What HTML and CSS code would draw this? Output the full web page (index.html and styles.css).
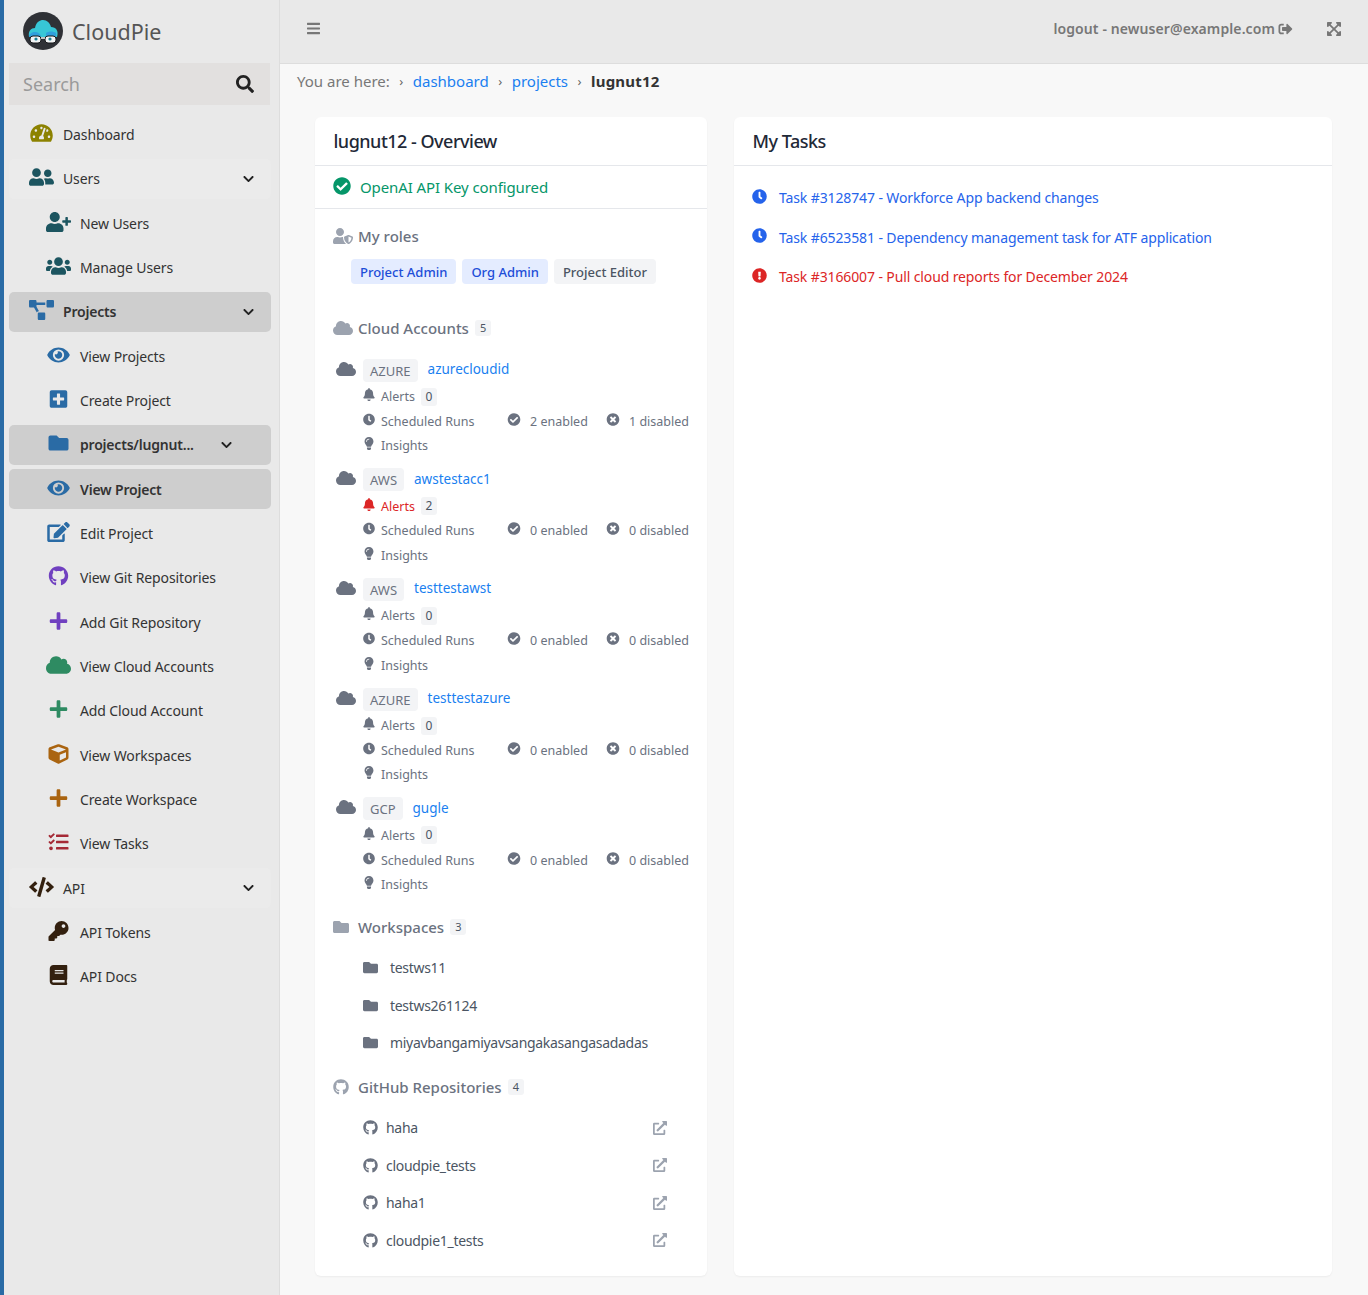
FILE: index.html
```html
<!DOCTYPE html>
<html lang="en">
<head>
    <meta charset="UTF-8">
    <meta name="viewport" content="width=device-width, initial-scale=1.0">
    <title>CloudPie - lugnut12</title>
    <link rel="stylesheet" href="styles.css">
</head>
<body>
    <!-- icon sprite -->
    <svg class="sprite" xmlns="http://www.w3.org/2000/svg">
        <symbol id="i-search" viewBox="0 0 512 512"><path d="M505 442.7L405.3 343c-4.5-4.5-10.6-7-17-7H372c27.6-35.3 44-79.7 44-128C416 93.1 322.9 0 208 0S0 93.1 0 208s93.1 208 208 208c48.3 0 92.7-16.4 128-44v16.3c0 6.4 2.5 12.5 7 17l99.7 99.7c9.4 9.4 24.6 9.4 33.9 0l28.3-28.3c9.4-9.4 9.4-24.6.1-34zM208 336c-70.7 0-128-57.2-128-128 0-70.7 57.2-128 128-128 70.7 0 128 57.2 128 128 0 70.7-57.2 128-128 128z"/></symbol>
        <symbol id="i-bars" viewBox="0 0 448 512"><path d="M16 132h416c8.837 0 16-7.163 16-16V76c0-8.837-7.163-16-16-16H16C7.163 60 0 67.163 0 76v40c0 8.837 7.163 16 16 16zm0 160h416c8.837 0 16-7.163 16-16v-40c0-8.837-7.163-16-16-16H16c-8.837 0-16 7.163-16 16v40c0 8.837 7.163 16 16 16zm0 160h416c8.837 0 16-7.163 16-16v-40c0-8.837-7.163-16-16-16H16c-8.837 0-16 7.163-16 16v40c0 8.837 7.163 16 16 16z"/></symbol>
        <symbol id="i-check" viewBox="0 0 512 512"><path d="M504 256c0 136.967-111.033 248-248 248S8 392.967 8 256 119.033 8 256 8s248 111.033 248 248zM227.314 387.314l184-184c6.248-6.248 6.248-16.379 0-22.627l-22.627-22.627c-6.248-6.249-16.379-6.249-22.628 0L216 308.118l-70.059-70.059c-6.248-6.248-16.379-6.248-22.628 0l-22.627 22.627c-6.248 6.248-6.248 16.379 0 22.627l104 104c6.249 6.249 16.379 6.249 22.628.001z"/></symbol>
        <symbol id="i-times" viewBox="0 0 512 512"><path d="M256 8C119 8 8 119 8 256s111 248 248 248 248-111 248-248S393 8 256 8zm121.6 313.1c4.7 4.7 4.7 12.3 0 17L338 377.6c-4.7 4.7-12.3 4.7-17 0L256 312l-65.1 65.6c-4.7 4.7-12.3 4.7-17 0L134.4 338c-4.7-4.7-4.7-12.3 0-17l65.6-65-65.6-65.1c-4.7-4.7-4.7-12.3 0-17l39.6-39.6c4.7-4.7 12.3-4.7 17 0l65 65.7 65.1-65.6c4.7-4.7 12.3-4.7 17 0l39.6 39.6c4.7 4.7 4.7 12.3 0 17L312 256l65.6 65.1z"/></symbol>
        <symbol id="i-clock" viewBox="0 0 512 512"><path d="M256,8C119,8,8,119,8,256S119,504,256,504,504,393,504,256,393,8,256,8Zm92.49,313h0l-20,25a16,16,0,0,1-22.49,2.5h0l-67-49.72a40,40,0,0,1-15-31.23V112a16,16,0,0,1,16-16h32a16,16,0,0,1,16,16V256l58,42.5A16,16,0,0,1,348.49,321Z"/></symbol>
        <symbol id="i-excl" viewBox="0 0 512 512"><path d="M504 256c0 136.997-111.043 248-248 248S8 392.997 8 256C8 119.083 119.043 8 256 8s248 111.083 248 248zm-248 50c-25.405 0-46 20.595-46 46s20.595 46 46 46 46-20.595 46-46-20.595-46-46-46zm-43.673-165.346l7.418 136c.347 6.364 5.609 11.346 11.982 11.346h48.546c6.373 0 11.635-4.982 11.982-11.346l7.418-136c.375-6.874-5.098-12.654-11.982-12.654h-63.383c-6.884 0-12.356 5.78-11.981 12.654z"/></symbol>
        <symbol id="i-bell" viewBox="0 0 448 512"><path d="M224 512c35.32 0 63.97-28.65 63.97-64H160.03c0 35.35 28.65 64 63.97 64zm215.39-149.71c-19.32-20.76-55.47-51.99-55.47-154.29 0-77.7-54.48-139.9-127.94-155.16V32c0-17.67-14.32-32-31.98-32s-31.98 14.33-31.98 32v20.84C118.56 68.1 64.08 130.3 64.08 208c0 102.3-36.15 133.53-55.47 154.29-6 6.45-8.66 14.16-8.61 21.71.11 16.4 12.98 32 32.1 32h383.8c19.12 0 32-15.6 32.1-32 .05-7.55-2.61-15.27-8.61-21.71z"/></symbol>
        <symbol id="i-cloud" viewBox="0 0 640 512"><path d="M537.6 226.6c4.1-10.7 6.4-22.4 6.4-34.6 0-53-43-96-96-96-19.7 0-38.1 6-53.3 16.2C367 64.2 315.3 32 256 32c-88.4 0-160 71.6-160 160 0 2.7.1 5.4.2 8.1C40.2 219.8 0 273.2 0 336c0 79.5 64.5 144 144 144h368c70.7 0 128-57.3 128-128 0-61.9-44-113.6-102.4-125.4z"/></symbol>
        <symbol id="i-folder" viewBox="0 0 512 512"><path d="M464 128H272l-64-64H48C21.49 64 0 85.49 0 112v288c0 26.51 21.49 48 48 48h416c26.51 0 48-21.49 48-48V176c0-26.51-21.49-48-48-48z"/></symbol>
        <symbol id="i-bulb" viewBox="0 0 352 512"><path d="M96.06 454.35c.01 6.29 1.87 12.45 5.36 17.69l17.09 25.69a31.99 31.99 0 0 0 26.64 14.28h61.71a31.99 31.99 0 0 0 26.64-14.28l17.09-25.69a31.989 31.989 0 0 0 5.36-17.69l.04-38.35H96.01l.05 38.35zM0 176c0 44.37 16.45 84.85 43.56 115.78 16.52 18.85 42.36 58.23 52.21 91.45.04.26.07.52.11.78h160.24c.04-.26.07-.51.11-.78 9.85-33.22 35.69-72.6 52.21-91.45C335.55 260.85 352 220.37 352 176 352 78.61 272.91-.3 175.45 0 73.44.31 0 82.97 0 176zm176-80c-44.11 0-80 35.89-80 80 0 8.84-7.16 16-16 16s-16-7.16-16-16c0-61.76 50.24-112 112-112 8.84 0 16 7.16 16 16s-7.16 16-16 16z"/></symbol>
        <symbol id="i-eye" viewBox="0 0 576 512"><path d="M572.52 241.4C518.29 135.59 410.93 64 288 64S57.68 135.64 3.48 241.41a32.35 32.35 0 0 0 0 29.19C57.71 376.41 165.07 448 288 448s230.32-71.64 284.52-177.41a32.35 32.35 0 0 0 0-29.19zM288 400a144 144 0 1 1 144-144 143.93 143.93 0 0 1-144 144zm0-240a95.31 95.31 0 0 0-25.31 3.79 47.85 47.85 0 0 1-66.9 66.9A95.78 95.78 0 1 0 288 160z"/></symbol>
        <symbol id="i-plus-square" viewBox="0 0 448 512"><path d="M400 32H48C21.5 32 0 53.5 0 80v352c0 26.5 21.5 48 48 48h352c26.5 0 48-21.5 48-48V80c0-26.5-21.5-48-48-48zm-32 252c0 6.6-5.4 12-12 12h-92v92c0 6.6-5.4 12-12 12h-56c-6.6 0-12-5.4-12-12v-92H92c-6.6 0-12-5.4-12-12v-56c0-6.6 5.4-12 12-12h92v-92c0-6.6 5.4-12 12-12h56c6.6 0 12 5.4 12 12v92h92c6.6 0 12 5.4 12 12v56z"/></symbol>
        <symbol id="i-plus" viewBox="0 0 448 512"><path d="M416 208H272V64c0-17.67-14.33-32-32-32h-32c-17.67 0-32 14.33-32 32v144H32c-17.67 0-32 14.33-32 32v32c0 17.67 14.33 32 32 32h144v144c0 17.67 14.33 32 32 32h32c17.67 0 32-14.33 32-32V304h144c17.67 0 32-14.33 32-32v-32c0-17.67-14.33-32-32-32z"/></symbol>
        <symbol id="i-edit" viewBox="0 0 576 512"><path d="M402.6 83.2l90.2 90.2c3.8 3.8 3.8 10 0 13.8L274.4 405.6l-92.8 10.3c-12.4 1.4-22.9-9.1-21.5-21.5l10.3-92.8L388.8 83.2c3.8-3.8 10-3.8 13.8 0zm162-22.9l-48.8-48.8c-15.2-15.2-39.9-15.2-55.2 0l-35.4 35.4c-3.8 3.8-3.8 10 0 13.8l90.2 90.2c3.8 3.8 10 3.8 13.8 0l35.4-35.4c15.2-15.3 15.2-40 0-55.2zM384 346.2V448H64V128h229.8c3.2 0 6.2-1.3 8.5-3.5l40-40c7.6-7.6 2.2-20.5-8.5-20.5H48C21.5 64 0 85.5 0 112v352c0 26.5 21.5 48 48 48h352c26.5 0 48-21.5 48-48V306.2c0-10.7-12.9-16-20.5-8.5l-40 40c-2.2 2.3-3.5 5.3-3.5 8.5z"/></symbol>
        <symbol id="i-github" viewBox="0 0 496 512"><path d="M244.8 8C106.1 8 0 113.3 0 252c0 110.9 69.8 205.8 169.5 239.2 12.8 2.3 17.3-5.6 17.3-12.1 0-6.2-.3-40.4-.3-61.4 0 0-70 15-84.7-29.8 0 0-11.4-29.1-27.8-36.6 0 0-22.9-15.7 1.6-15.4 0 0 24.9 2 38.6 25.8 21.9 38.6 58.6 27.5 72.9 20.9 2.3-16 8.8-27.1 16-33.7-55.9-6.2-112.3-14.3-112.3-110.5 0-27.5 7.6-41.3 23.6-58.9-2.6-6.5-11.1-33.3 2.6-67.9 20.9-6.5 69 27 69 27 20-5.6 41.5-8.5 62.8-8.5s42.8 2.9 62.8 8.5c0 0 48.1-33.6 69-27 13.7 34.7 5.2 61.4 2.6 67.9 16 17.7 25.8 31.5 25.8 58.9 0 96.5-58.9 104.2-114.8 110.5 9.2 7.9 17 22.9 17 46.4 0 33.7-.3 75.4-.3 83.6 0 6.5 4.6 14.4 17.3 12.1C428.2 457.8 496 362.9 496 252 496 113.3 383.5 8 244.8 8z"/></symbol>
        <symbol id="i-external" viewBox="0 0 512 512"><path d="M432,320H400a16,16,0,0,0-16,16V448H64V128H208a16,16,0,0,0,16-16V80a16,16,0,0,0-16-16H48A48,48,0,0,0,0,112V464a48,48,0,0,0,48,48H400a48,48,0,0,0,48-48V336A16,16,0,0,0,432,320ZM488,0h-128c-21.37,0-32.05,25.91-17,41l35.73,35.73L135,320.37a24,24,0,0,0,0,34L157.67,377a24,24,0,0,0,34,0L435.28,133.32,471,169c15,15,41,4.5,41-17V24A24,24,0,0,0,488,0Z"/></symbol>
        <symbol id="i-users" viewBox="0 0 640 512"><path d="M192 256c61.9 0 112-50.1 112-112S253.9 32 192 32 80 82.1 80 144s50.1 112 112 112zm76.8 32h-8.3c-20.8 10-43.9 16-68.5 16s-47.6-6-68.5-16h-8.3C51.6 288 0 339.6 0 403.2V432c0 26.5 21.5 48 48 48h288c26.5 0 48-21.5 48-48v-28.8c0-63.6-51.6-115.2-115.2-115.2zM480 256c53 0 96-43 96-96s-43-96-96-96-96 43-96 96 43 96 96 96zm48 32h-3.8c-13.9 4.8-28.6 8-44.2 8s-30.3-3.2-44.2-8H432c-20.4 0-39.2 5.9-55.7 15.4 24.4 26.3 39.7 61.2 39.7 99.8v38.4c0 2.2-.5 4.3-.6 6.4H592c26.5 0 48-21.5 48-48 0-61.9-50.1-112-112-112z"/></symbol>
        <symbol id="i-group" viewBox="0 0 640 512"><path d="M96 224c35.3 0 64-28.7 64-64s-28.7-64-64-64-64 28.7-64 64 28.7 64 64 64zm448 0c35.3 0 64-28.7 64-64s-28.7-64-64-64-64 28.7-64 64 28.7 64 64 64zm32 32h-64c-17.6 0-33.5 7.1-45.1 18.6 40.3 22.1 68.9 62 75.1 109.4h66c17.7 0 32-14.3 32-32v-32c0-35.3-28.7-64-64-64zm-256 0c61.9 0 112-50.1 112-112S381.9 32 320 32 208 82.1 208 144s50.1 112 112 112zm76.8 32h-8.3c-20.8 10-43.9 16-68.5 16s-47.6-6-68.5-16h-8.3C179.6 288 128 339.6 128 403.2V432c0 26.5 21.5 48 48 48h288c26.5 0 48-21.5 48-48v-28.8c0-63.6-51.6-115.2-115.2-115.2zm-223.7-13.4C161.5 263.1 145.6 256 128 256H64c-35.3 0-64 28.7-64 64v32c0 17.7 14.3 32 32 32h65.9c6.3-47.4 34.9-87.3 75.2-109.4z"/></symbol>
        <symbol id="i-user-plus" viewBox="0 0 640 512"><path d="M624 208h-64v-64c0-8.8-7.2-16-16-16h-32c-8.8 0-16 7.2-16 16v64h-64c-8.8 0-16 7.2-16 16v32c0 8.8 7.2 16 16 16h64v64c0 8.8 7.2 16 16 16h32c8.8 0 16-7.2 16-16v-64h64c8.8 0 16-7.2 16-16v-32c0-8.8-7.2-16-16-16zm-400 48c70.7 0 128-57.3 128-128S294.7 0 224 0 96 57.3 96 128s57.3 128 128 128zm89.6 32h-16.7c-22.2 10.2-46.9 16-72.9 16s-50.6-5.8-72.9-16h-16.7C60.2 288 0 348.2 0 422.4V464c0 26.5 21.5 48 48 48h352c26.5 0 48-21.5 48-48v-41.6c0-74.2-60.2-134.4-134.4-134.4z"/></symbol>
        <symbol id="i-chevron" viewBox="0 0 448 512"><path d="M207.029 381.476L12.686 187.132c-9.373-9.373-9.373-24.569 0-33.941l22.667-22.667c9.357-9.357 24.522-9.375 33.901-.04L224 284.505l154.745-154.021c9.379-9.335 24.544-9.317 33.901.04l22.667 22.667c9.373 9.373 9.373 24.569 0 33.941L240.971 381.476c-9.373 9.372-24.569 9.372-33.942 0z"/></symbol>
        <symbol id="i-diagram" viewBox="0 0 640 512"><path d="M384 320H256c-17.67 0-32 14.33-32 32v128c0 17.67 14.33 32 32 32h128c17.67 0 32-14.33 32-32V352c0-17.67-14.33-32-32-32zM192 32c0-17.67-14.33-32-32-32H32C14.33 0 0 14.33 0 32v128c0 17.67 14.33 32 32 32h95.72l73.16 128.04C211.98 300.98 232.4 288 256 288h.28L192 175.51V128h224V64H192V32zM608 0H480c-17.67 0-32 14.33-32 32v128c0 17.67 14.33 32 32 32h128c17.67 0 32-14.33 32-32V32c0-17.67-14.33-32-32-32z"/></symbol>
        <symbol id="i-gauge" viewBox="0 0 576 512"><path d="M288 32C128.94 32 0 160.94 0 320c0 52.8 14.25 102.26 39.06 144.8 5.61 9.62 16.3 15.2 27.44 15.2h443c11.14 0 21.83-5.58 27.44-15.2C561.75 422.26 576 372.8 576 320c0-159.06-128.94-288-288-288zm0 64c14.71 0 26.58 10.13 30.32 23.65-1.11 2.26-2.64 4.23-3.45 6.67l-9.22 27.67c-5.13 3.49-10.97 6.01-17.64 6.01-17.67 0-32-14.33-32-32S270.33 96 288 96zM96 384c-17.67 0-32-14.33-32-32s14.33-32 32-32 32 14.33 32 32-14.33 32-32 32zm48-160c-17.67 0-32-14.33-32-32s14.33-32 32-32 32 14.33 32 32-14.33 32-32 32zm246.77-72.41l-61.33 184C343.13 347.33 352 364.54 352 384c0 11.72-3.38 22.55-8.88 32H232.88c-5.5-9.45-8.88-20.28-8.88-32 0-33.94 26.5-61.43 59.9-63.59l61.34-184.01c4.17-12.56 17.73-19.45 30.36-15.17 12.57 4.19 19.35 17.79 15.17 30.36zm14.66 57.2l15.52-46.55c3.47-1.29 7.13-2.23 11.05-2.23 17.67 0 32 14.33 32 32s-14.33 32-32 32c-11.38-.01-20.89-6.28-26.57-15.22zM480 384c-17.67 0-32-14.33-32-32s14.33-32 32-32 32 14.33 32 32-14.33 32-32 32z"/></symbol>
        <symbol id="i-cube" viewBox="0 0 512 512"><path d="M239.1 6.3l-208 78c-18.7 7-31.1 25-31.1 45v225.1c0 18.2 10.3 34.8 26.5 42.9l208 104c13.5 6.8 29.4 6.8 42.9 0l208-104c16.3-8.1 26.5-24.8 26.5-42.9V129.3c0-20-12.4-37.9-31.1-44.9l-208-78C262 2.2 250 2.2 239.1 6.3zM256 68.4l192 72v1.1l-192 78-192-78v-1.1l192-72zm32 356V275.5l160-65v133.9l-160 80z"/></symbol>
        <symbol id="i-tasks" viewBox="0 0 512 512"><path d="M139.61 35.5a12 12 0 0 0-17 0L58.93 98.81l-22.7-22.12a12 12 0 0 0-17 0L3.53 92.41a12 12 0 0 0 0 17l47.59 47.4a12.78 12.78 0 0 0 17.61 0l15.59-15.62L156.52 69a12.09 12.09 0 0 0 .09-17zm0 159.19a12 12 0 0 0-17 0l-63.68 63.72-22.7-22.1a12 12 0 0 0-17 0L3.53 252a12 12 0 0 0 0 17L51 316.5a12.77 12.77 0 0 0 17.6 0l15.7-15.69 72.2-72.22a12 12 0 0 0 .09-16.9zM64 368c-26.49 0-48.59 21.5-48.59 48S37.53 464 64 464a48 48 0 0 0 0-96zm432 16H208a16 16 0 0 0-16 16v32a16 16 0 0 0 16 16h288a16 16 0 0 0 16-16v-32a16 16 0 0 0-16-16zm0-320H208a16 16 0 0 0-16 16v32a16 16 0 0 0 16 16h288a16 16 0 0 0 16-16V80a16 16 0 0 0-16-16zm0 160H208a16 16 0 0 0-16 16v32a16 16 0 0 0 16 16h288a16 16 0 0 0 16-16v-32a16 16 0 0 0-16-16z"/></symbol>
        <symbol id="i-code" viewBox="0 0 640 512"><path d="M278.9 511.5l-61-17.7c-6.4-1.8-10-8.5-8.2-14.9L346.2 8.7c1.8-6.4 8.5-10 14.9-8.2l61 17.7c6.4 1.8 10 8.5 8.2 14.9L293.8 503.3c-1.9 6.4-8.5 10.1-14.9 8.2zm-114-112.2l43.5-46.4c4.6-4.9 4.3-12.7-.8-17.2L117 256l90.6-79.7c5.1-4.5 5.5-12.3.8-17.2l-43.5-46.4c-4.5-4.8-12.1-5.1-17-.5L3.8 247.2c-5.1 4.7-5.1 12.8 0 17.5l144.1 135.1c4.9 4.6 12.5 4.4 17-.5zm327.2.6l144.1-135.1c5.1-4.7 5.1-12.8 0-17.5L492.1 112.1c-4.8-4.5-12.4-4.3-17 .5L431.6 159c-4.6 4.9-4.3 12.7.8 17.2L523 256l-90.6 79.7c-5.1 4.5-5.5 12.3-.8 17.2l43.5 46.4c4.5 4.9 12.1 5.1 17 .6z"/></symbol>
        <symbol id="i-key" viewBox="0 0 512 512"><path d="M512 176.001C512 273.203 433.202 352 336 352c-11.22 0-22.19-1.062-32.827-3.069l-24.012 27.014A23.999 23.999 0 0 1 261.223 384H224v40c0 13.255-10.745 24-24 24h-40v40c0 13.255-10.745 24-24 24H24c-13.255 0-24-10.745-24-24v-78.059c0-6.365 2.529-12.47 7.029-16.971l161.802-161.802C163.108 213.814 160 195.271 160 176 160 78.798 238.797.001 335.999 0 433.488-.001 512 78.511 512 176.001zM336 128c0 26.51 21.49 48 48 48s48-21.49 48-48-21.49-48-48-48-48 21.49-48 48z"/></symbol>
        <symbol id="i-book" viewBox="0 0 448 512"><path d="M448 360V24c0-13.3-10.7-24-24-24H96C43 0 0 43 0 96v320c0 53 43 96 96 96h328c13.3 0 24-10.7 24-24v-16c0-7.5-3.5-14.3-8.9-18.7-4.2-15.4-4.2-59.3 0-74.7 5.4-4.3 8.9-11.1 8.9-18.6zM128 134c0-3.3 2.7-6 6-6h212c3.3 0 6 2.7 6 6v20c0 3.3-2.7 6-6 6H134c-3.3 0-6-2.7-6-6v-20zm0 64c0-3.3 2.7-6 6-6h212c3.3 0 6 2.7 6 6v20c0 3.3-2.7 6-6 6H134c-3.3 0-6-2.7-6-6v-20zm253.4 250H96c-17.7 0-32-14.3-32-32 0-17.6 14.4-32 32-32h285.4c-1.9 17.1-1.9 46.9 0 64z"/></symbol>
        <symbol id="i-logout" viewBox="0 0 512 512"><path d="M497 273L329 441c-15 15-41 4.5-41-17v-96H152c-13.3 0-24-10.7-24-24v-96c0-13.3 10.7-24 24-24h136V88c0-21.4 25.9-32 41-17l168 168c9.3 9.4 9.3 24.6 0 34zM192 436v-40c0-6.6-5.4-12-12-12H96c-17.7 0-32-14.3-32-32V160c0-17.7 14.3-32 32-32h84c6.6 0 12-5.4 12-12V76c0-6.6-5.4-12-12-12H96c-53 0-96 43-96 96v192c0 53 43 96 96 96h84c6.6 0 12-5.4 12-12z"/></symbol>
        <symbol id="i-expand" viewBox="0 0 448 512"><path d="M448 344v112a23.94 23.94 0 0 1-24 24H312c-21.39 0-32.09-25.9-17-41l36.2-36.2L224 295.6 116.77 402.9 153 439c15.09 15.1 4.39 41-17 41H24a23.94 23.94 0 0 1-24-24V344c0-21.4 25.89-32.1 41-17l36.19 36.2L184.46 256 77.18 148.7 41 185c-15.1 15.1-41 4.4-41-17V56a23.94 23.94 0 0 1 24-24h112c21.39 0 32.09 25.9 17 41l-36.2 36.2L224 216.4l107.23-107.3L295 73c-15.09-15.1-4.39-41 17-41h112a23.94 23.94 0 0 1 24 24v112c0 21.4-25.89 32.1-41 17l-36.19-36.2L263.54 256l107.28 107.3L407 327.1c15.1-15.2 41-4.5 41 16.9z"/></symbol>
        <symbol id="i-shield" viewBox="0 0 640 512"><path d="M622.3 271.1l-115.2-45c-4.1-1.6-12.6-3.7-22.2 0l-115.2 45c-10.7 4.2-17.7 14-17.7 24.9 0 111.6 68.7 188.8 132.9 213.9 9.6 3.7 18 1.6 22.2 0C558.4 489.9 640 420.5 640 296c0-10.9-7-20.7-17.7-24.9zM496 462.4V273.3l95.5 37.3c-5.6 87.1-60.9 135.4-95.5 151.8zM224 256c70.7 0 128-57.3 128-128S294.7 0 224 0 96 57.3 96 128s57.3 128 128 128zm96 40c0-2.5.8-4.7 1.1-7.2-2.5-.1-4.9-.8-7.5-.8h-16.7c-22.2 10.2-46.9 16-72.9 16s-50.6-5.8-72.9-16h-16.7C60.2 288 0 348.2 0 422.4V464c0 26.5 21.5 48 48 48h352c6.8 0 13.3-1.5 19.2-4-54-42.9-99.2-116.7-99.2-212z"/></symbol>
    </svg>

    <div class="app">
        <aside class="sidebar">
            <div class="brand">
                <svg class="logo" viewBox="0 0 40 38">
                    <ellipse cx="20" cy="19" rx="20" ry="19" fill="#2f3136"/>
                    <path d="M6 25c-1-6 2-9 6-9 1-6 5-8 8-8 4 0 7 3 8 7 5 0 8 4 6 10z" fill="#37c6d6"/>
                    <path d="M6 25c0-3 3-5 6-5 3 0 5 2 6 4z" fill="#2f9fdc"/>
                    <path d="M23 21c3-2 7-2 10 0v3H23z" fill="#2f9fdc"/>
                    <rect x="7" y="24" width="11" height="7" rx="3" fill="#f2f4f5" stroke="#16181b" stroke-width="1"/>
                    <rect x="22" y="24" width="11" height="7" rx="3" fill="#f2f4f5" stroke="#16181b" stroke-width="1"/>
                    <path d="M18 26h4" stroke="#f2f4f5" stroke-width="1.5"/>
                    <circle cx="13" cy="27" r="1.6" fill="#1d7f93"/>
                    <circle cx="27" cy="27" r="1.6" fill="#1d7f93"/>
                </svg>
                <span class="brand-name">CloudPie</span>
            </div>
            <div class="search">
                <span class="search-text">Search</span>
                <svg class="search-ico"><use href="#i-search"/></svg>
            </div>
            <nav class="nav">
                <a class="nav-item"><svg class="ico c-olive"><use href="#i-gauge"/></svg>Dashboard</a>
                <a class="nav-item group"><svg class="ico c-teal"><use href="#i-users"/></svg>Users<svg class="chev"><use href="#i-chevron"/></svg></a>
                <a class="nav-item sub"><svg class="ico c-teal"><use href="#i-user-plus"/></svg>New Users</a>
                <a class="nav-item sub"><svg class="ico c-teal"><use href="#i-group"/></svg>Manage Users</a>
                <a class="nav-item active"><svg class="ico c-blue"><use href="#i-diagram"/></svg>Projects<svg class="chev"><use href="#i-chevron"/></svg></a>
                <a class="nav-item sub"><svg class="ico c-blue"><use href="#i-eye"/></svg>View Projects</a>
                <a class="nav-item sub"><svg class="ico c-blue"><use href="#i-plus-square"/></svg>Create Project</a>
                <a class="nav-item sub active"><svg class="ico c-blue"><use href="#i-folder"/></svg>projects/lugnut...<svg class="chev chev-sub"><use href="#i-chevron"/></svg></a>
                <a class="nav-item sub active"><svg class="ico c-blue"><use href="#i-eye"/></svg>View Project</a>
                <a class="nav-item sub"><svg class="ico c-blue"><use href="#i-edit"/></svg>Edit Project</a>
                <a class="nav-item sub"><svg class="ico c-purple"><use href="#i-github"/></svg>View Git Repositories</a>
                <a class="nav-item sub"><svg class="ico c-purple"><use href="#i-plus"/></svg>Add Git Repository</a>
                <a class="nav-item sub"><svg class="ico c-green"><use href="#i-cloud"/></svg>View Cloud Accounts</a>
                <a class="nav-item sub"><svg class="ico c-green"><use href="#i-plus"/></svg>Add Cloud Account</a>
                <a class="nav-item sub"><svg class="ico c-amber"><use href="#i-cube"/></svg>View Workspaces</a>
                <a class="nav-item sub"><svg class="ico c-amber"><use href="#i-plus"/></svg>Create Workspace</a>
                <a class="nav-item sub"><svg class="ico c-red"><use href="#i-tasks"/></svg>View Tasks</a>
                <a class="nav-item group"><svg class="ico c-brown"><use href="#i-code"/></svg>API<svg class="chev"><use href="#i-chevron"/></svg></a>
                <a class="nav-item sub"><svg class="ico c-brown"><use href="#i-key"/></svg>API Tokens</a>
                <a class="nav-item sub"><svg class="ico c-brown"><use href="#i-book"/></svg>API Docs</a>
            </nav>
        </aside>

        <div class="content">
            <header class="topbar">
                <svg class="menu-ico"><use href="#i-bars"/></svg>
                <span class="logout">logout - newuser@example.com <svg class="logout-ico"><use href="#i-logout"/></svg></span>
                <svg class="expand-ico"><use href="#i-expand"/></svg>
            </header>

            <div class="crumbs">
                <span class="crumb-label">You are here:</span>
                <span class="crumb-sep">&rsaquo;</span>
                <a class="crumb-link">dashboard</a>
                <span class="crumb-sep">&rsaquo;</span>
                <a class="crumb-link">projects</a>
                <span class="crumb-sep">&rsaquo;</span>
                <strong class="crumb-current">lugnut12</strong>
            </div>

            <main class="panels">
                <section class="card">
                    <h2 class="card-title">lugnut12 - Overview</h2>
                    <div class="key-row"><svg class="key-ico"><use href="#i-check"/></svg>OpenAI API Key configured</div>
                    <div class="card-body">
                        <h3 class="sec-head"><svg class="sec-ico"><use href="#i-shield"/></svg>My roles</h3>
                        <div class="roles">
                            <span class="role role-blue">Project Admin</span>
                            <span class="role role-blue">Org Admin</span>
                            <span class="role">Project Editor</span>
                        </div>

                        <h3 class="sec-head sec-cloud"><svg class="sec-ico"><use href="#i-cloud"/></svg>Cloud Accounts <span class="count">5</span></h3>
                        <div class="accounts">
                            <div class="account">
                                <div class="acct-name"><svg class="acct-cloud"><use href="#i-cloud"/></svg><span class="provider">AZURE</span><a class="acct-link">azurecloudid</a></div>
                                <div class="acct-line alerts"><svg class="line-ico"><use href="#i-bell"/></svg>Alerts <span class="count">0</span></div>
                                <div class="acct-line runs">
                                    <span class="runs-label"><svg class="line-ico"><use href="#i-clock"/></svg>Scheduled Runs</span>
                                    <span class="runs-on"><svg class="line-ico"><use href="#i-check"/></svg>2 enabled</span>
                                    <span class="runs-off"><svg class="line-ico"><use href="#i-times"/></svg>1 disabled</span>
                                </div>
                                <div class="acct-line"><svg class="line-ico"><use href="#i-bulb"/></svg>Insights</div>
                            </div>
                            <div class="account">
                                <div class="acct-name"><svg class="acct-cloud"><use href="#i-cloud"/></svg><span class="provider">AWS</span><a class="acct-link">awstestacc1</a></div>
                                <div class="acct-line alerts alerts-on"><svg class="line-ico"><use href="#i-bell"/></svg>Alerts <span class="count">2</span></div>
                                <div class="acct-line runs">
                                    <span class="runs-label"><svg class="line-ico"><use href="#i-clock"/></svg>Scheduled Runs</span>
                                    <span class="runs-on"><svg class="line-ico"><use href="#i-check"/></svg>0 enabled</span>
                                    <span class="runs-off"><svg class="line-ico"><use href="#i-times"/></svg>0 disabled</span>
                                </div>
                                <div class="acct-line"><svg class="line-ico"><use href="#i-bulb"/></svg>Insights</div>
                            </div>
                            <div class="account">
                                <div class="acct-name"><svg class="acct-cloud"><use href="#i-cloud"/></svg><span class="provider">AWS</span><a class="acct-link">testtestawst</a></div>
                                <div class="acct-line alerts"><svg class="line-ico"><use href="#i-bell"/></svg>Alerts <span class="count">0</span></div>
                                <div class="acct-line runs">
                                    <span class="runs-label"><svg class="line-ico"><use href="#i-clock"/></svg>Scheduled Runs</span>
                                    <span class="runs-on"><svg class="line-ico"><use href="#i-check"/></svg>0 enabled</span>
                                    <span class="runs-off"><svg class="line-ico"><use href="#i-times"/></svg>0 disabled</span>
                                </div>
                                <div class="acct-line"><svg class="line-ico"><use href="#i-bulb"/></svg>Insights</div>
                            </div>
                            <div class="account">
                                <div class="acct-name"><svg class="acct-cloud"><use href="#i-cloud"/></svg><span class="provider">AZURE</span><a class="acct-link">testtestazure</a></div>
                                <div class="acct-line alerts"><svg class="line-ico"><use href="#i-bell"/></svg>Alerts <span class="count">0</span></div>
                                <div class="acct-line runs">
                                    <span class="runs-label"><svg class="line-ico"><use href="#i-clock"/></svg>Scheduled Runs</span>
                                    <span class="runs-on"><svg class="line-ico"><use href="#i-check"/></svg>0 enabled</span>
                                    <span class="runs-off"><svg class="line-ico"><use href="#i-times"/></svg>0 disabled</span>
                                </div>
                                <div class="acct-line"><svg class="line-ico"><use href="#i-bulb"/></svg>Insights</div>
                            </div>
                            <div class="account">
                                <div class="acct-name"><svg class="acct-cloud"><use href="#i-cloud"/></svg><span class="provider">GCP</span><a class="acct-link">gugle</a></div>
                                <div class="acct-line alerts"><svg class="line-ico"><use href="#i-bell"/></svg>Alerts <span class="count">0</span></div>
                                <div class="acct-line runs">
                                    <span class="runs-label"><svg class="line-ico"><use href="#i-clock"/></svg>Scheduled Runs</span>
                                    <span class="runs-on"><svg class="line-ico"><use href="#i-check"/></svg>0 enabled</span>
                                    <span class="runs-off"><svg class="line-ico"><use href="#i-times"/></svg>0 disabled</span>
                                </div>
                                <div class="acct-line"><svg class="line-ico"><use href="#i-bulb"/></svg>Insights</div>
                            </div>
                        </div>

                        <h3 class="sec-head sec-work"><svg class="sec-ico sec-ico-sq"><use href="#i-folder"/></svg>Workspaces <span class="count">3</span></h3>
                        <ul class="rows">
                            <li class="row"><svg class="row-ico"><use href="#i-folder"/></svg>testws11</li>
                            <li class="row"><svg class="row-ico"><use href="#i-folder"/></svg>testws261124</li>
                            <li class="row"><svg class="row-ico"><use href="#i-folder"/></svg>miyavbangamiyavsangakasangasadadas</li>
                        </ul>

                        <h3 class="sec-head sec-git"><svg class="sec-ico sec-ico-sq"><use href="#i-github"/></svg>GitHub Repositories <span class="count">4</span></h3>
                        <ul class="rows repos">
                            <li class="row"><svg class="row-ico"><use href="#i-github"/></svg>haha<svg class="ext-ico"><use href="#i-external"/></svg></li>
                            <li class="row"><svg class="row-ico"><use href="#i-github"/></svg>cloudpie_tests<svg class="ext-ico"><use href="#i-external"/></svg></li>
                            <li class="row"><svg class="row-ico"><use href="#i-github"/></svg>haha1<svg class="ext-ico"><use href="#i-external"/></svg></li>
                            <li class="row"><svg class="row-ico"><use href="#i-github"/></svg>cloudpie1_tests<svg class="ext-ico"><use href="#i-external"/></svg></li>
                        </ul>
                    </div>
                </section>

                <section class="card">
                    <h2 class="card-title">My Tasks</h2>
                    <ul class="tasks">
                        <li class="task"><svg class="task-ico"><use href="#i-clock"/></svg>Task #3128747 - Workforce App backend changes</li>
                        <li class="task"><svg class="task-ico"><use href="#i-clock"/></svg>Task #6523581 - Dependency management task for ATF application</li>
                        <li class="task task-late"><svg class="task-ico"><use href="#i-excl"/></svg>Task #3166007 - Pull cloud reports for December 2024</li>
                    </ul>
                </section>
            </main>
        </div>
    </div>
</body>
</html>
```

FILE: styles.css
```css
* {
    box-sizing: border-box;
}
body {
    margin: 0;
    font-family: "Noto Sans", "Open Sans", sans-serif;
    font-size: 14px;
    color: #333;
    background-color: #f8f8f8;
}
a {
    text-decoration: none;
}
svg {
    fill: currentColor;
    flex: none;
}
ul {
    list-style: none;
    margin: 0;
    padding: 0;
}
.sprite {
    display: none;
}
.app {
    display: flex;
    min-height: 100vh;
}

/* sidebar */
.sidebar {
    width: 280px;
    flex: none;
    padding: 0 8px 0 5px;
    background-color: #e9e9e9;
    border-left: 4px solid #2a6ba5;
    border-right: 1px solid #ddd;
}
.brand {
    display: flex;
    align-items: center;
    height: 63px;
    padding: 0 0 2px 14px;
}
.logo {
    width: 40px;
    height: 38px;
}
.brand-name {
    margin-left: 9px;
    padding-top: 2px;
    font-size: 21.5px;
    color: #555;
}
.search {
    display: flex;
    align-items: center;
    justify-content: space-between;
    width: 261px;
    height: 42px;
    padding: 0 16px 0 14px;
    background-color: #e2e0df;
}
.search-text {
    font-size: 18px;
    color: #9a9a9a;
}
.search-ico {
    width: 18px;
    height: 18px;
    color: #222;
}
.nav {
    display: flex;
    flex-direction: column;
    gap: 4px;
    margin-top: 9.4px;
}
.nav-item {
    display: flex;
    align-items: center;
    height: 40.33px;
    padding-left: 20px;
    border-radius: 5px;
    font-size: 14px;
    letter-spacing: -0.12px;
    color: #333;
}
.nav-item.sub {
    padding-left: 37px;
}
.nav-item.group {
    background-color: #ebebeb;
}
.nav-item.active {
    background-color: #cecece;
    font-weight: 600;
    letter-spacing: -0.2px;
}
.ico {
    width: 25px;
    height: 20px;
    margin-right: 9px;
    margin-top: -3px;
}
.chev {
    width: 11px;
    height: 12px;
    margin-left: auto;
    margin-right: 17px;
    color: #222;
}
.chev-sub {
    margin-right: 39px;
}
.c-olive { color: #8c8200; }
.c-teal { color: #1c5560; }
.c-blue { color: #2a6ba5; }
.c-purple { color: #7040c0; }
.c-green { color: #2e8b62; }
.c-amber { color: #aa6410; }
.c-red { color: #a52a36; }
.c-brown { color: #33200f; }

/* top bar */
.content {
    flex: 1;
    min-width: 0;
}
.topbar {
    display: flex;
    align-items: center;
    height: 64px;
    padding: 0 27px 6px 27px;
    background-color: #e9e9e9;
    border-bottom: 1px solid #ddd;
    color: #777;
}
.menu-ico {
    width: 13px;
    height: 15px;
}
.logout {
    display: flex;
    align-items: center;
    gap: 3px;
    margin-left: auto;
    font-size: 14px;
    font-weight: 600;
    letter-spacing: 0.1px;
}
.logout-ico {
    width: 15px;
    height: 14px;
}
.expand-ico {
    width: 14px;
    height: 16px;
    margin-left: 34px;
}

.crumbs {
    display: flex;
    align-items: center;
    gap: 7.5px;
    height: 33px;
    padding-left: 17px;
    font-size: 15px;
    color: #777;
}
.crumb-sep {
    width: 8px;
    text-align: center;
    font-size: 13px;
    color: #666;
}
.crumb-link {
    color: #1a7ff0;
}
.crumb-current {
    color: #333;
    font-weight: 700;
    letter-spacing: 0.2px;
}

/* panels */
.panels {
    display: grid;
    grid-template-columns: 392px 598px;
    gap: 27px;
    padding: 20px 0 19px 35px;
}
.card {
    background: #fff;
    border-radius: 6px;
    box-shadow: 0 1px 2px rgba(0, 0, 0, 0.05);
}
.card-title {
    height: 49px;
    margin: 0;
    padding: 0 18.5px;
    line-height: 48px;
    font-size: 18px;
    font-weight: 500;
    letter-spacing: -0.5px;
    color: #1f2937;
    border-bottom: 1px solid #e5e7eb;
}
.key-row {
    display: flex;
    align-items: center;
    height: 43px;
    padding: 0 19px 0 18px;
    font-size: 15px;
    letter-spacing: -0.1px;
    color: #059669;
    border-bottom: 1px solid #e5e7eb;
}
.key-ico {
    width: 18px;
    height: 18px;
    margin-right: 9px;
    margin-top: -2px;
}
.card-body {
    padding: 15px 18px 17px;
}
.sec-head {
    display: flex;
    align-items: center;
    height: 24px;
    margin: 0;
    font-size: 15px;
    font-weight: 500;
    color: #6b7280;
}
.sec-ico {
    width: 20px;
    height: 16px;
    margin-right: 5px;
    color: #9ca3af;
}
.sec-ico-sq {
    width: 16px;
    margin-right: 9px;
}
.count {
    display: inline-block;
    margin-left: 6px;
    padding: 0 5px;
    height: 16px;
    line-height: 16px;
    font-size: 11px;
    font-weight: 400;
    color: #4b5563;
    background: #f3f4f6;
    border-radius: 3px;
}
.acct-line .count {
    height: 18px;
    line-height: 18px;
    font-size: 12px;
    padding: 0 4.5px;
}
.roles {
    display: flex;
    gap: 6px;
    margin: 11px 0 0 18px;
}
.role {
    height: 25px;
    padding: 0 9px;
    line-height: 26px;
    font-size: 13px;
    font-weight: 500;
    color: #4b5563;
    background: #f3f4f6;
    border-radius: 4px;
}
.role-blue {
    color: #1d4ed8;
    background: #e4ecff;
}
.sec-cloud {
    margin-top: 32px;
}
.accounts {
    margin-top: 18px;
}
.account {
    height: 109.7px;
    padding-left: 30px;
    font-size: 12.5px;
    color: #6b7280;
}
.acct-name {
    display: flex;
    align-items: center;
    height: 24px;
    margin-left: -27px;
}
.acct-cloud {
    width: 20px;
    height: 16px;
    margin-right: 7px;
    margin-top: -3px;
}
.provider {
    padding: 0 7px;
    height: 23px;
    line-height: 24px;
    font-size: 13px;
    color: #6b7280;
    background: #f3f4f6;
    border-radius: 4px;
}
.acct-link {
    margin-left: 10px;
    margin-top: -2px;
    font-size: 13.5px;
    color: #1a7ff0;
}
.acct-line {
    display: flex;
    align-items: center;
    height: 24.5px;
}
.alerts {
    margin-top: 2px;
    height: 25px;
}
.alerts-on {
    color: #dc2626;
}
.alerts-on .count {
    color: #4b5563;
}
.runs-label,
.runs-on,
.runs-off {
    display: flex;
    align-items: center;
}
.runs-label {
    width: 144px;
}
.runs-on {
    width: 99px;
}
.runs-on .line-ico,
.runs-off .line-ico {
    width: 14px;
    margin-right: 9px;
}
.line-ico {
    width: 12px;
    height: 13px;
    margin-right: 6px;
    margin-top: -4px;
}
.sec-work {
    margin-top: 9px;
}
.rows {
    margin-top: 9.5px;
    padding-left: 30px;
    font-size: 14px;
    letter-spacing: -0.3px;
    color: #4b5563;
}
.row {
    display: flex;
    align-items: center;
    height: 37.5px;
}
.row-ico {
    width: 15px;
    height: 15px;
    margin-right: 12px;
    color: #6b7280;
}
.repos .row-ico {
    margin-right: 8px;
}
.ext-ico {
    width: 14px;
    height: 14px;
    margin-left: auto;
    margin-right: 22px;
    color: #9ca3af;
}
.sec-git {
    margin-top: 14px;
}

/* tasks */
.tasks {
    padding: 11.75px 18px 0;
}
.task {
    display: flex;
    align-items: center;
    height: 39.5px;
    font-size: 14px;
    letter-spacing: -0.12px;
    color: #2563eb;
}
.task-late {
    color: #dc2626;
}
.task-ico {
    width: 15px;
    height: 15px;
    margin-right: 12px;
    margin-top: -3px;
}
```
